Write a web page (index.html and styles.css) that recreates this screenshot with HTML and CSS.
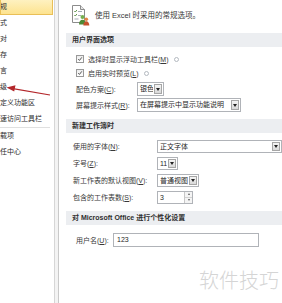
FILE: index.html
```html
<!DOCTYPE html>
<html lang="zh-CN">
<head>
    <meta charset="UTF-8">
    <meta name="viewport" content="width=device-width, initial-scale=1.0">
    <title>Excel 选项</title>
    <link rel="stylesheet" href="styles.css">
</head>
<body>
    <div class="window">
        <ul class="nav">
            <li class="nav-item active">常规</li>
            <li class="nav-item">公式</li>
            <li class="nav-item">校对</li>
            <li class="nav-item">保存</li>
            <li class="nav-item">语言</li>
            <li class="nav-item">高级</li>
            <li class="nav-item">自定义功能区</li>
            <li class="nav-item">快速访问工具栏</li>
            <li class="nav-sep"></li>
            <li class="nav-item">加载项</li>
            <li class="nav-item">信任中心</li>
        </ul>
        <div class="gutter"></div>

        <div class="main">
            <div class="intro">
                <svg class="intro-icon" width="20" height="22" viewBox="0 0 20 22">
                    <path d="M2.5 1.5h8l4 4v13h-12z" fill="#fff" stroke="#8c8c8c"/>
                    <path d="M10.5 1.5v4h4" fill="#e6e6e6" stroke="#8c8c8c"/>
                    <path d="M4.3 7l1 1 1.6-2M4.3 11l1 1 1.6-2" fill="none" stroke="#4f8a3a" stroke-width="0.9"/>
                    <path d="M8 7.5h4M8 11.5h3M4.5 15h4" stroke="#9aa3ad" stroke-width="0.9"/>
                    <circle cx="12.5" cy="13" r="2" fill="#74b04f"/>
                    <path d="M9 20.5c0-3 1.5-4.8 3.5-4.8s3.5 1.8 3.5 4.8z" fill="#4d8a35"/>
                    <circle cx="16.3" cy="15.2" r="1.8" fill="#e58546"/>
                    <path d="M13.3 21.5c0-2.6 1.3-4.2 3-4.2s3 1.6 3 4.2z" fill="#c4512b"/>
                </svg>
                <span class="intro-text">使用 Excel 时采用的常规选项。</span>
            </div>

            <div class="band">用户界面选项</div>
            <div class="section ui-section">
                <div class="row check-row first">
                    <span class="checkbox"><svg viewBox="0 0 8 8"><path d="M1.6 4.1l1.7 1.8 3.1-4.1"/></svg></span>
                    <span>选择时显示浮动工具栏(<u>M</u>)</span>
                    <span class="info"></span>
                </div>
                <div class="row check-row">
                    <span class="checkbox"><svg viewBox="0 0 8 8"><path d="M1.6 4.1l1.7 1.8 3.1-4.1"/></svg></span>
                    <span>启用实时预览(<u>L</u>)</span>
                    <span class="info"></span>
                </div>
                <div class="row field-row">
                    <span class="label">配色方案(<u>C</u>):</span>
                    <span class="select w-silver"><span class="value">银色</span><span class="drop"></span></span>
                </div>
                <div class="row field-row">
                    <span class="label">屏幕提示样式(<u>R</u>):</span>
                    <span class="select w-tips"><span class="value">在屏幕提示中显示功能说明</span><span class="drop"></span></span>
                </div>
            </div>

            <div class="band">新建工作簿时</div>
            <div class="section book-section">
                <div class="row field-row first">
                    <span class="label">使用的字体(<u>N</u>):</span>
                    <span class="select w-font"><span class="value">正文字体</span><span class="drop"></span></span>
                </div>
                <div class="row field-row">
                    <span class="label">字号(<u>Z</u>):</span>
                    <span class="select w-size"><span class="value">11</span><span class="drop"></span></span>
                </div>
                <div class="row field-row">
                    <span class="label">新工作表的默认视图(<u>V</u>):</span>
                    <span class="select w-view"><span class="value">普通视图</span><span class="drop"></span></span>
                </div>
                <div class="row field-row">
                    <span class="label">包含的工作表数(<u>S</u>):</span>
                    <span class="spinner"><span class="value">3</span><span class="spin"><i class="up"></i><i class="down"></i></span></span>
                </div>
            </div>

            <div class="band">对 Microsoft Office 进行个性化设置</div>
            <div class="section user-section">
                <div class="row field-row first">
                    <span class="label">用户名(<u>U</u>):</span>
                    <span class="textbox">123</span>
                </div>
            </div>
        </div>
    </div>

    <!-- red pointer drawn over the nav -->
    <svg class="pointer" width="56" height="20" viewBox="0 0 56 20">
        <path d="M50 15L13 8.6" stroke="#b3262a" stroke-width="1.1"/>
        <path d="M6.5 7.6L15.5 5.2 14.2 11.4z" fill="#b3262a"/>
    </svg>

    <div class="watermark">软件技巧</div>
</body>
</html>
```

FILE: styles.css
```css
* {
    margin: 0;
    padding: 0;
    box-sizing: border-box;
}

body {
    position: relative;
    width: 282px;
    height: 303px;
    overflow: hidden;
    background: #fff;
    color: #383838;
    font-family: "Liberation Sans", "Noto Sans CJK SC", sans-serif;
    font-size: 7px;
}

u {
    text-decoration: underline;
    text-underline-offset: 1px;
}

.window {
    display: flex;
    height: 303px;
}

/* left nav */
.nav {
    width: 55px;
    flex-shrink: 0;
    margin-top: -1px;
    border-right: 1px solid #d6d6d6;
    list-style: none;
}

.nav-item {
    height: 16px;
    line-height: 16px;
    text-indent: -7px;
    white-space: nowrap;
    overflow: hidden;
    color: #2b2b2b;
}

.nav-item.active {
    margin-right: 1px;
    border: 1px solid #e9bf57;
    line-height: 14px;
    text-indent: -8px;
    background: linear-gradient(#fef1c0, #fde38f);
}

.nav-sep {
    height: 1px;
    margin-right: 4px;
    background: #e0e0e0;
}

.gutter {
    width: 4px;
    flex-shrink: 0;
    background: #f3f3f3;
    border-right: 1px solid #c9c9c9;
}

/* right content */
.main {
    flex: 1;
    padding-left: 7px;
}

.intro {
    display: flex;
    align-items: center;
    gap: 5px;
    height: 33px;
    padding-left: 4px;
    padding-bottom: 4px;
}

.intro-text {
    font-size: 7.5px;
}

.band {
    height: 14px;
    line-height: 14px;
    padding-left: 6px;
    background: #eceef1;
    font-weight: bold;
    color: #2f2f2f;
}

.section {
    display: flex;
    flex-direction: column;
    gap: 1px;
    padding-bottom: 6px;
}

.ui-section {
    gap: 0;
    padding-left: 10px;
}

.book-section {
    padding-left: 7px;
}

.user-section {
    padding-left: 10px;
}

.row {
    display: flex;
    align-items: center;
    height: 16px;
}

.row.first {
    margin-top: 5px;
}

.user-section .row.first {
    margin-top: 7px;
}

.check-row {
    height: 14px;
    gap: 4px;
}

.check-row + .field-row {
    margin-top: 1px;
}

.checkbox {
    display: flex;
    width: 8px;
    height: 8px;
    border: 1px solid #999;
    background: linear-gradient(#ececec, #fff);
}

.checkbox svg {
    width: 6px;
    height: 6px;
}

.checkbox path {
    fill: none;
    stroke: #3a3a3a;
    stroke-width: 1.1;
}

.info {
    width: 5px;
    height: 5px;
    margin-left: 1px;
    border: 1px solid #b3b9c0;
    border-radius: 50%;
}

.label {
    flex-shrink: 0;
}

.ui-section .label {
    width: 61px;
}

.book-section .label {
    width: 84px;
}

.user-section .label {
    width: 37px;
}

.select,
.spinner,
.textbox {
    display: flex;
    align-items: stretch;
    height: 13px;
    border: 1px solid #b0b3b8;
    background: #fff;
    color: #262626;
}

.value {
    flex: 1;
    padding-left: 2px;
    line-height: 11px;
    white-space: nowrap;
    overflow: hidden;
}

.drop {
    display: flex;
    align-items: center;
    justify-content: center;
    width: 8px;
    margin: 1px;
    border: 1px solid #a6a6a6;
    background: linear-gradient(#f5f5f5, #d9d9d9);
}

.drop::after {
    content: "";
    border-top: 3px solid #222;
    border-left: 2px solid transparent;
    border-right: 2px solid transparent;
}

.ui-section .select {
    height: 14px;
}

.ui-section .value {
    line-height: 12px;
}

.w-silver { width: 27px; }
.w-tips { width: 104px; }
.w-font { width: 125px; }
.w-size { width: 21px; }
.w-view { width: 42px; }

.spinner {
    width: 36px;
}

.spin {
    display: flex;
    flex-direction: column;
    width: 8px;
    border-left: 1px solid #c7c7c7;
}

.spin i {
    flex: 1;
    display: flex;
    align-items: center;
    justify-content: center;
    background: #f4f4f4;
}

.spin .up {
    border-bottom: 1px solid #d2d2d2;
}

.spin .up::after,
.spin .down::after {
    content: "";
    border-left: 1.5px solid transparent;
    border-right: 1.5px solid transparent;
}

.spin .up::after {
    border-bottom: 2px solid #555;
}

.spin .down::after {
    border-top: 2px solid #555;
}

.textbox {
    width: 146px;
    height: 14px;
    padding-left: 3px;
    line-height: 12px;
}

/* overlays */
.pointer {
    position: absolute;
    left: 0;
    top: 80px;
}

.watermark {
    position: absolute;
    left: 199px;
    top: 270px;
    font-family: "Noto Sans CJK SC", sans-serif;
    font-size: 20px;
    font-weight: 300;
    line-height: 1;
    color: #d5d5d5;
}
```
